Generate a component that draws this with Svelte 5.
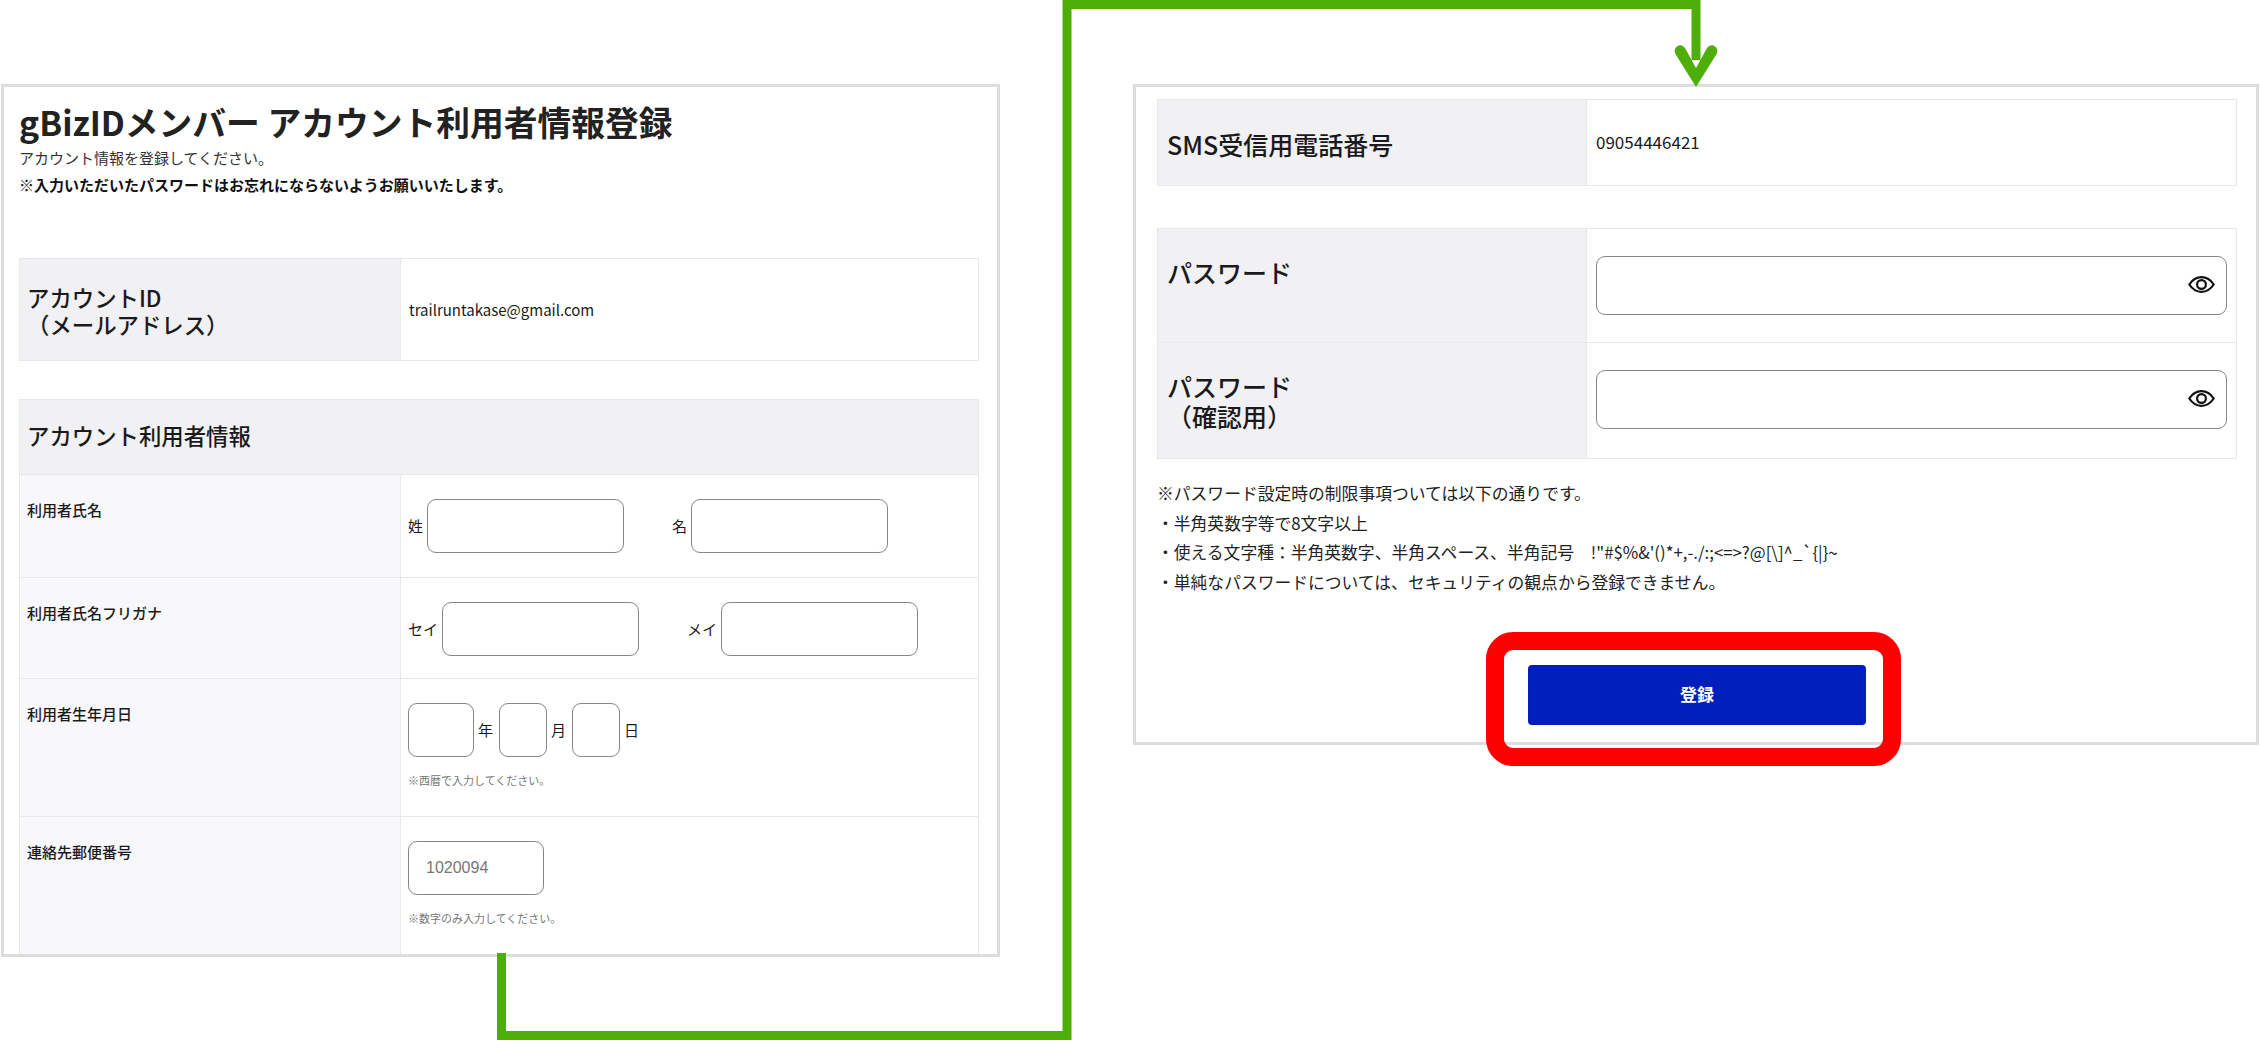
<script>
  const symbols = `!"#$%&'()*+,-./:;<=>?@[\\]^_\`{|}~`;
</script>

<div class="page">
  <section class="panel left">
    <header class="intro">
      <h1>gBizIDメンバー アカウント利用者情報登録</h1>
      <p class="sub">アカウント情報を登録してください。</p>
      <p class="warn">※入力いただいたパスワードはお忘れにならないようお願いいたします。</p>
    </header>

    <div class="table l-table account">
      <div class="row r-account">
        <div class="th big">アカウントID<br />（メールアドレス）</div>
        <div class="td center">trailruntakase@gmail.com</div>
      </div>
    </div>

    <div class="table l-table">
      <div class="section-head big">アカウント利用者情報</div>
      <div class="row r-name">
        <div class="th sm">利用者氏名</div>
        <div class="td inputs">
          <label>姓</label><input class="w197" />
          <label class="next">名</label><input class="w197" />
        </div>
      </div>
      <div class="row r-kana">
        <div class="th sm">利用者氏名フリガナ</div>
        <div class="td inputs">
          <label>セイ</label><input class="w197" />
          <label class="next">メイ</label><input class="w197" />
        </div>
      </div>
      <div class="row r-birth">
        <div class="th sm">利用者生年月日</div>
        <div class="td">
          <div class="inputs date">
            <input class="w66" /><label>年</label>
            <input class="w48" /><label>月</label>
            <input class="w48" /><label>日</label>
          </div>
          <p class="hint">※西暦で入力してください。</p>
        </div>
      </div>
      <div class="row r-zip">
        <div class="th sm">連絡先郵便番号</div>
        <div class="td">
          <input class="w136 zip" placeholder="1020094" />
          <p class="hint">※数字のみ入力してください。</p>
        </div>
      </div>
    </div>
  </section>

  <section class="panel right">
    <div class="table r-table sms">
      <div class="row r-sms">
        <div class="th big mid">SMS受信用電話番号</div>
        <div class="td center">09054446421</div>
      </div>
    </div>

    <div class="table r-table">
      <div class="row r-pw">
        <div class="th big pw">パスワード</div>
        <div class="td pwcell">
          <div class="pwfield">
            <input type="password" />
            <svg class="eye" viewBox="0 0 27 17" aria-hidden="true">
              <path d="M1.3 8.5C4.5 3.6 8.6 1.2 13.5 1.2S22.500 3.600 25.700 8.500C22.500 13.400 18.400 15.800 13.500 15.800S4.500 13.400 1.300 8.500Z" />
              <circle cx="13.500" cy="8.500" r="4.400" />
            </svg>
          </div>
        </div>
      </div>
      <div class="row r-pw2">
        <div class="th big pw">パスワード<br />（確認用）</div>
        <div class="td pwcell">
          <div class="pwfield">
            <input type="password" />
            <svg class="eye" viewBox="0 0 27 17" aria-hidden="true">
              <path d="M1.3 8.5C4.5 3.6 8.6 1.2 13.5 1.2S22.500 3.600 25.700 8.500C22.500 13.400 18.400 15.800 13.500 15.800S4.500 13.400 1.300 8.500Z" />
              <circle cx="13.500" cy="8.500" r="4.400" />
            </svg>
          </div>
        </div>
      </div>
    </div>

    <div class="notes">
      <p>※パスワード設定時の制限事項ついては以下の通りです。</p>
      <p>・半角英数字等で8文字以上</p>
      <p>・使える文字種：半角英数字、半角スペース、半角記号　{symbols}</p>
      <p>・単純なパスワードについては、セキュリティの観点から登録できません。</p>
    </div>

    <div class="actions">
      <button type="button">登録<span class="highlight"></span></button>
    </div>
  </section>

  <svg class="connector" viewBox="0 0 2260 1041" aria-hidden="true">
    <path class="line" d="M501.500 953V1035.500H1067V4.500H1696V60" />
    <path class="head" d="M1696 87L1675.500 54A5.500 5.500 0 0 1 1685 48L1696 68L1707 48A5.500 5.500 0 0 1 1716.500 54Z" />
  </svg>
</div>

<style>
  :global(body) {
    margin: 0;
    background: #fff;
  }

  .page {
    position: relative;
    display: flex;
    align-items: flex-start;
    gap: 133px;
    width: 2260px;
    height: 1041px;
    padding: 84px 0 0 1px;
    box-sizing: border-box;
    overflow: hidden;
    font-family: "Noto Sans CJK JP", "Noto Sans", sans-serif;
    color: #1a1a1c;
  }

  .panel {
    box-sizing: border-box;
    border: 3px solid #dddddd;
    background: #fff;
    flex: none;
  }

  .left {
    width: 999px;
    height: 873px;
    padding: 11px 18px 0 15px;
    overflow: hidden;
  }

  .right {
    width: 1126px;
    height: 661px;
    padding: 12px 19px 0 21px;
  }

  h1 {
    margin: 0;
    font-size: 33.750px;
    line-height: 48px;
    font-weight: 700;
    color: #222;
  }

  .sub {
    margin: 0;
    font-size: 15px;
    line-height: 24px;
    color: #333;
  }

  .warn {
    margin: 3px 0 0;
    font-size: 15px;
    line-height: 24px;
    font-weight: 700;
    color: #111;
  }

  .intro {
    height: 160px;
  }

  .table {
    box-sizing: border-box;
    border: 1px solid #e8e8ea;
    border-bottom: 0;
  }

  .account {
    margin-bottom: 38px;
  }

  .sms {
    margin-bottom: 42px;
  }

  .row {
    display: grid;
    box-sizing: border-box;
    border-bottom: 1px solid #e8e8ea;
  }

  .l-table .row {
    grid-template-columns: 381px 1fr;
  }

  .r-table .row {
    grid-template-columns: 429px 1fr;
  }

  .r-account { height: 102px; }
  .r-name { height: 103px; }
  .r-kana { height: 101px; }
  .r-birth { height: 138px; }
  .r-zip { height: 160px; }
  .r-sms { height: 86px; }
  .r-pw { height: 114px; }
  .r-pw2 { height: 116px; }

  .th {
    background: #f8f8fa;
    padding: 0 7px;
    border-right: 1px solid #e8e8ea;
  }

  .th.big,
  .section-head {
    background: #f1f1f3;
    font-size: 22.400px;
    line-height: 27px;
    font-weight: 500;
    color: #1a1a1c;
  }

  .section-head {
    box-sizing: border-box;
    height: 75px;
    padding: 22px 7px 0;
    border-bottom: 1px solid #e8e8ea;
  }

  .r-account .th {
    padding-top: 25px;
  }

  .r-table .th.big {
    font-size: 25px;
  }

  .th.mid {
    padding: 31px 9px 0;
  }

  .th.pw {
    padding: 28px 9px 0;
    line-height: 30px;
  }

  .th.sm {
    padding-top: 23px;
    font-size: 15px;
    line-height: 24px;
    font-weight: 500;
  }

  .td {
    padding: 0 7px;
    font-size: 15px;
    line-height: 22px;
  }

  .td.center {
    display: flex;
    align-items: center;
    padding-left: 8px;
  }

  .r-table .td {
    padding-left: 9px;
  }

  .r-table .td.center {
    font-size: 17px;
    padding-bottom: 2px;
  }

  .inputs {
    display: flex;
    align-items: center;
    padding-top: 24px;
  }

  .td.inputs {
    align-self: start;
  }

  .inputs label {
    margin-right: 4px;
  }

  .inputs label.next {
    margin-left: 48px;
  }

  .date label {
    margin: 0 6px 0 4px;
  }

  input {
    box-sizing: border-box;
    height: 54px;
    border: 1px solid #868686;
    border-top-width: 1.500px;
    border-radius: 9px;
    background: #fff;
    outline: none;
    padding: 0 17px;
    flex: none;
    font-family: "Liberation Sans", sans-serif;
    font-size: 16px;
  }

  input::placeholder {
    color: #777;
    opacity: 1;
  }

  .w197 { width: 197px; }
  .w66 { width: 66px; }
  .w48 { width: 48px; }
  .w136 { width: 136px; }

  .zip {
    display: block;
    margin-top: 24px;
  }

  .hint {
    margin: 15px 0 0;
    font-size: 11px;
    line-height: 16px;
    color: #777;
  }

  .pwcell {
    padding-top: 27px;
  }

  .pwfield {
    position: relative;
    width: 631px;
  }

  .pwfield input {
    display: block;
    width: 100%;
    height: 59px;
  }

  .eye {
    position: absolute;
    right: 12px;
    top: 20px;
    width: 27px;
    height: 17px;
    fill: none;
    stroke: #111;
    stroke-width: 2.200;
  }

  .notes {
    margin-top: 20px;
    font-size: 16.800px;
    line-height: 29.500px;
    color: #222;
  }

  .notes p {
    margin: 0;
  }

  .actions {
    margin-top: 68px;
    padding-left: 371px;
  }

  button {
    position: relative;
    width: 338px;
    height: 60px;
    border: 0;
    border-radius: 4px;
    background: #001ebb;
    color: #fff;
    font-family: inherit;
    font-size: 17px;
    font-weight: 700;
    padding: 0 0 3px;
  }

  .highlight {
    position: absolute;
    inset: -33px -35px -41px -42px;
    border: 18px solid #ff0000;
    border-radius: 27px;
  }

  .connector {
    position: absolute;
    inset: 0;
    width: 2260px;
    height: 1041px;
    pointer-events: none;
  }

  .line {
    fill: none;
    stroke: #4cae06;
    stroke-width: 9;
  }

  .head {
    fill: #4cae06;
  }
</style>
